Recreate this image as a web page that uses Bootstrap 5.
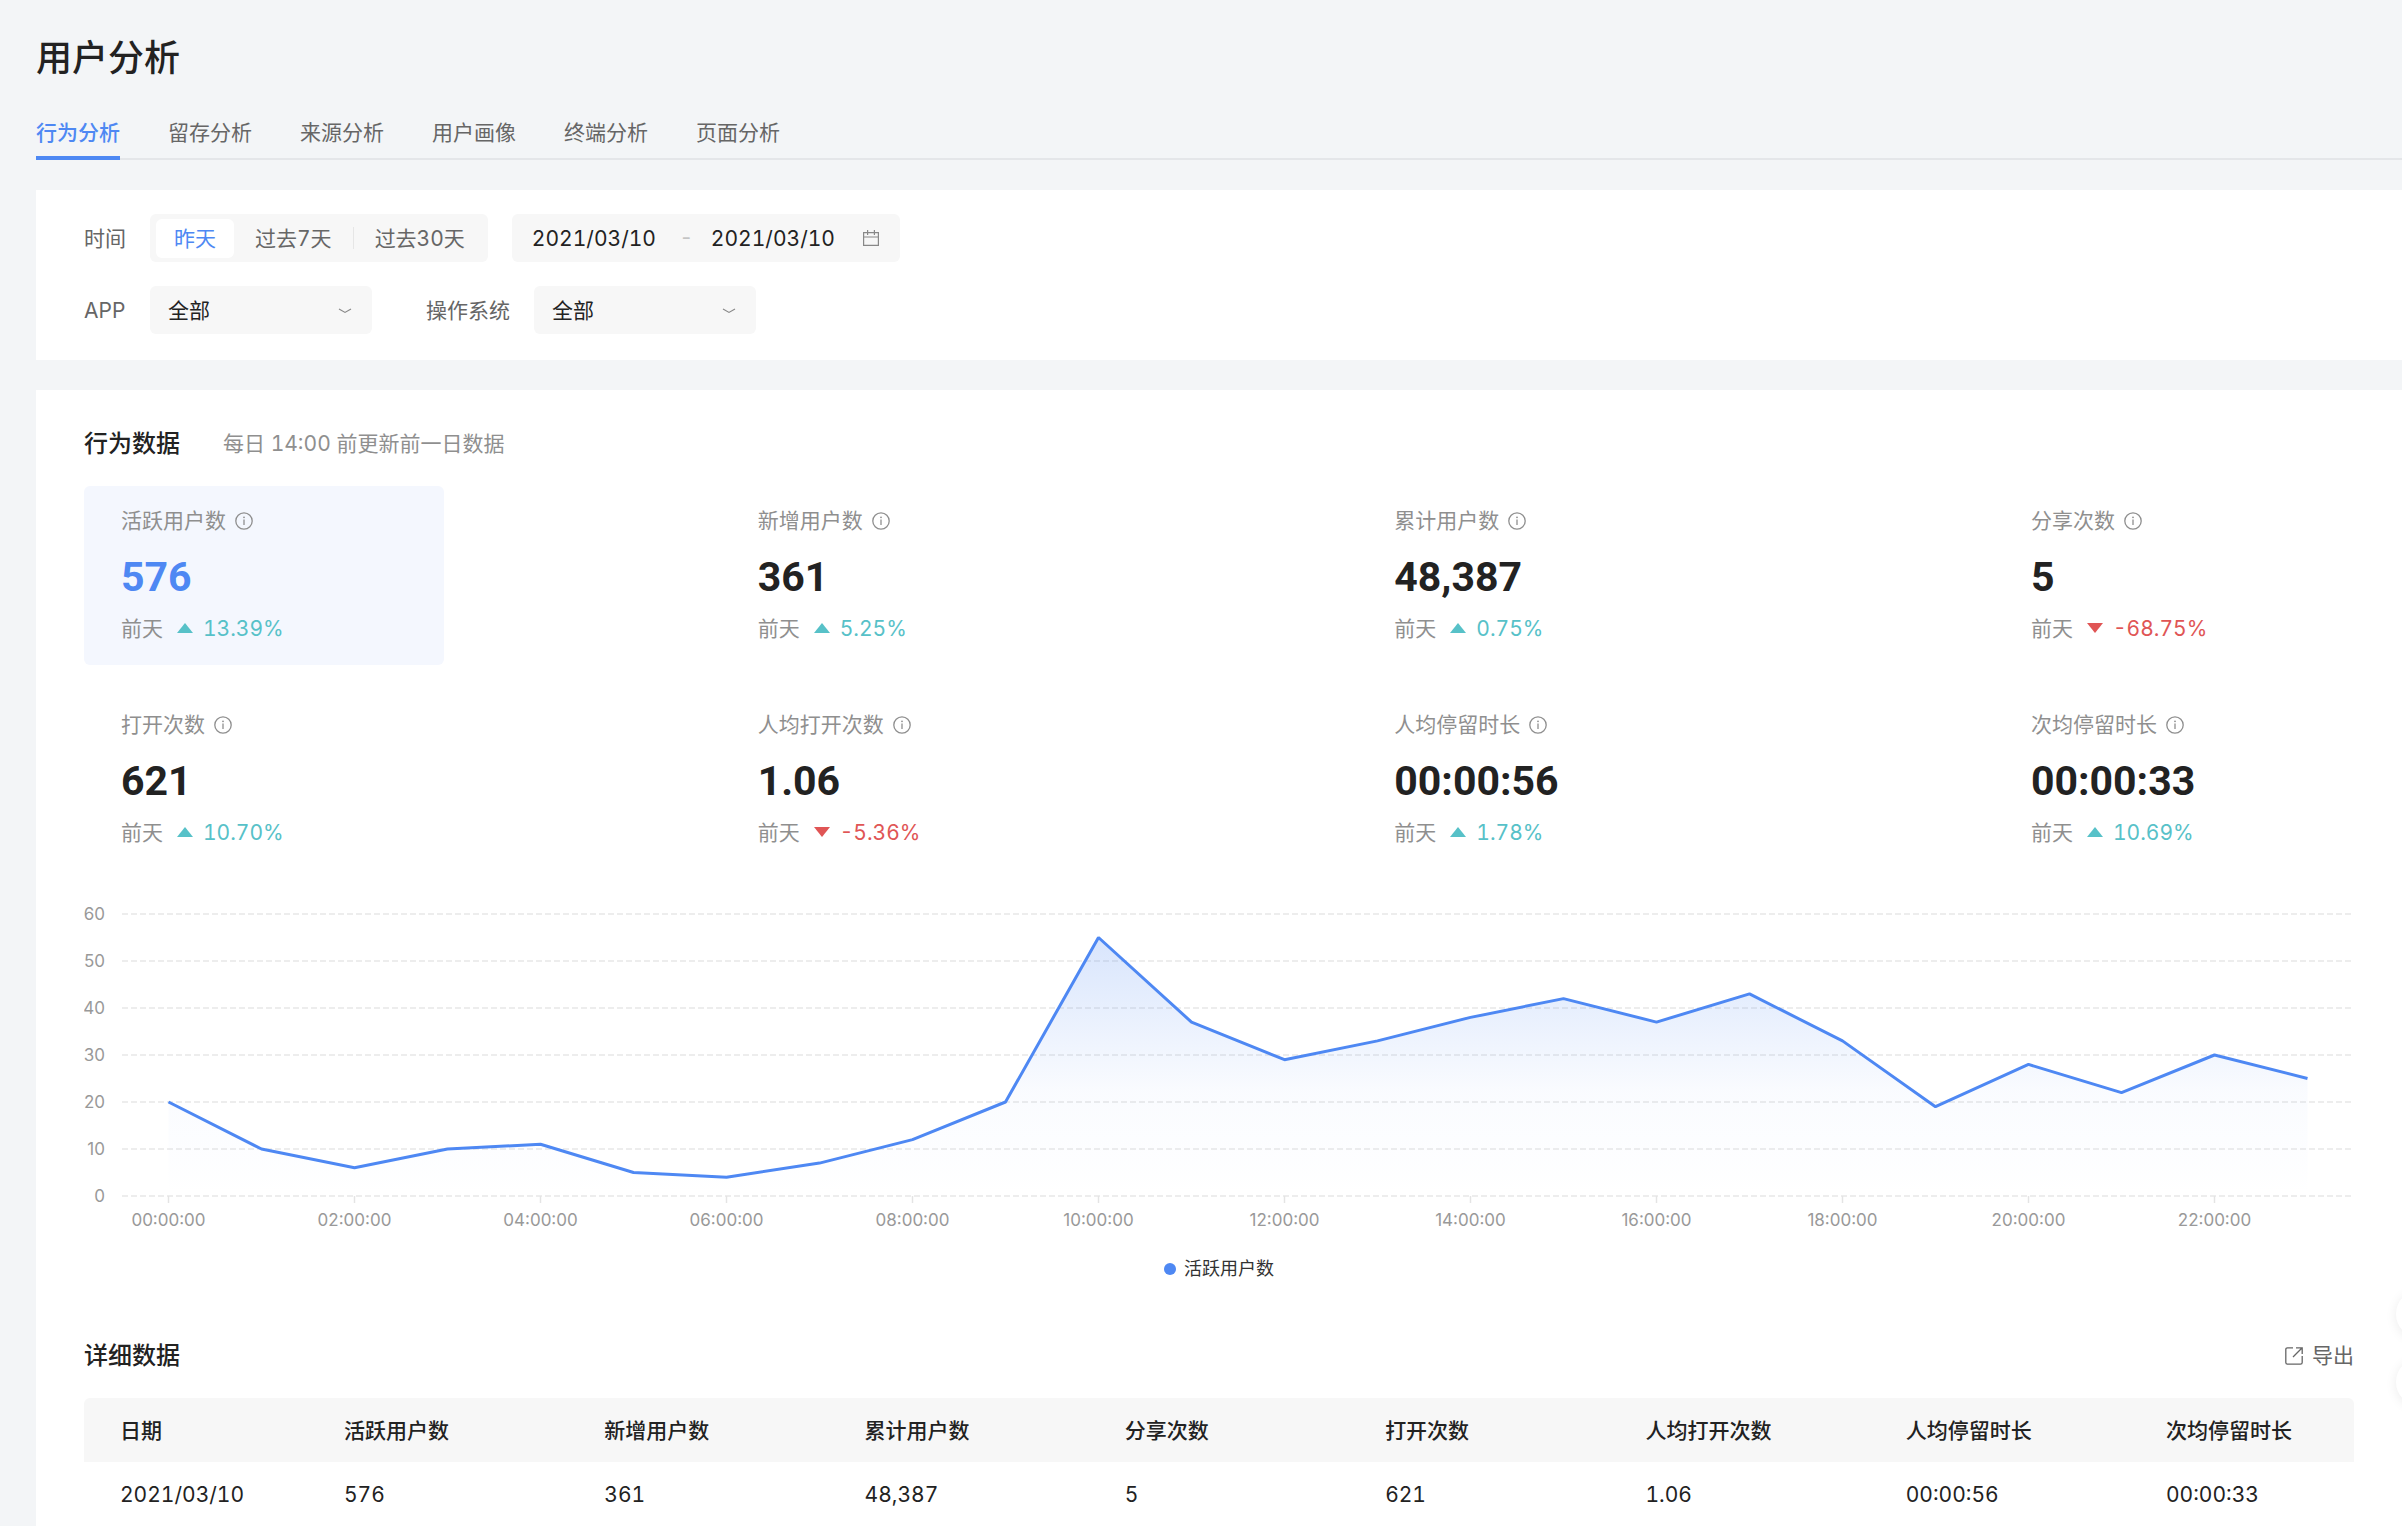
<!DOCTYPE html>
<html lang="zh-CN">
<head>
<meta charset="utf-8">
<meta name="viewport" content="width=device-width, initial-scale=1">
<title>用户分析</title>
<link href="https://cdn.jsdelivr.net/npm/bootstrap@5.3.0/dist/css/bootstrap.min.css" rel="stylesheet">
<style>
  :root { --ink: #222; --soft: #666; --faint: #8f8f8f; --brand: #4e88f3; --fill: #f7f7f7; --up: #57c1c8; --down: #e05555; }
  body { background: #f3f5f7; color: var(--ink); font: 400 21px/32px Inter, "Noto Sans CJK SC", sans-serif; font-variant-numeric: tabular-nums; }
  button, input, select { font: inherit; font-variant-numeric: inherit; color: inherit; }
  .page { padding: 31px 0 0 36px; }
  .page-title { font-size: 36px; line-height: 54px; font-weight: 500; margin: 0 0 32px; }
  .tabs { gap: 48px; box-shadow: inset 0 -2px #e4e6e9; }
  .tabs .nav-link { padding: 0 0 7px; color: var(--soft); border-bottom: 4px solid transparent; }
  .tabs .nav-link.active { color: var(--brand); border-color: var(--brand); font-weight: 500; }
  .panel { background: #fff; margin-top: 30px; padding: 24px 48px 26px; }
  .panel-main { padding: 37px 48px 0; }
  .filters { gap: 24px; }
  .filter-label { color: var(--soft); padding-top: 2px; }
  .narrow-label { width: 42px; white-space: nowrap; }
  .box { height: 48px; background-color: var(--fill); border: 0; border-radius: 6px; }
  .seg { padding: 0 2px 0 6px; }
  .seg button { height: 39px; border: 0; border-radius: 6px; background: none; color: var(--soft); padding: 2px 21px 0; white-space: nowrap; }
  .seg button.on { background: #fff; color: var(--brand); padding: 2px 18px 0; }
  .seg-line { width: 1px; height: 22px; background: #e6e6e6; }
  .dates { padding: 0 21px 0 20px; width: 388px; }
  .dates input { border: 0; background: none; padding: 2px 0 0; width: 130px; outline: 0; }
  .dates .dash { width: 49px; color: #c4c4c4; text-align: center; }
  .pick { position: relative; }
  .pick select { width: 222px; padding: 2px 18px 0; appearance: none; }
  .pick svg { position: absolute; right: 20px; top: 21px; pointer-events: none; }
  .second-filter { margin-left: 30px; }
  .heading { font-size: 24px; line-height: 34px; font-weight: 500; margin: 0; }
  .note { color: var(--faint); margin-left: 43px; }
  .stats { display: grid; grid-template-columns: repeat(4, 360px); justify-content: space-between; row-gap: 25px; margin-top: 25px; }
  .stat { border: 0; border-radius: 6px; background: none; padding: 19px 36px 20px 37px; text-align: left; color: var(--faint); }
  .stat.on { background: #f4f7fe; }
  .stat .figure-num { display: block; font: 700 41px/48px Roboto, sans-serif; color: var(--ink); margin: 16px 0 12px; }
  .stat.on .figure-num { color: var(--brand); }
  .stat .name, .stat .delta { display: flex; align-items: center; }
  .stat .name { gap: 9px; }
  .stat .rate { display: flex; align-items: center; gap: 10px; margin-left: 14px; color: var(--up); }
  .stat .rate svg { margin-bottom: 2px; }
  .stat .rate.fall { color: var(--down); }
  .chart { display: block; width: 100%; height: auto; margin-top: 27px; }
  .chart text { font: 17px Inter, sans-serif; fill: #999; }
  .legend-row { margin-top: 12px; font-size: 18px; line-height: 30px; gap: 8px; color: #333; }
  .legend-dot { width: 12px; height: 12px; border-radius: 50%; background: var(--brand); }
  .detail { margin-top: 55px; }
  .export { border: 0; background: none; padding: 0; gap: 9px; color: var(--soft); }
  .grid-table { table-layout: fixed; margin: 25px 0 0; color: var(--ink); }
  .grid-table th, .grid-table td { height: 64px; padding: 2px 0 0 36px; border: 0; vertical-align: middle; color: var(--ink); }
  .grid-table th { background: var(--fill); font-weight: 500; }
  .grid-table th:first-child { width: 224px; border-radius: 6px 0 0 0; }
  .grid-table th:last-child { width: 224px; border-radius: 0 6px 0 0; }
  .float-tools { position: fixed; right: -42px; top: 1290px; display: flex; flex-direction: column; gap: 20px; }
  .float-tools button { width: 48px; height: 48px; border: 0; border-radius: 50%; background: #fff; box-shadow: 0 2px 12px rgba(0,0,0,.08); }
</style>
<script src="https://cdn.jsdelivr.net/npm/bootstrap@5.3.0/dist/js/bootstrap.bundle.min.js"></script>
</head>
<body>
<svg class="d-none" aria-hidden="true">
  <symbol id="info" viewBox="0 0 18 18"><circle cx="9" cy="9" r="8.2" fill="none" stroke="currentColor" stroke-width="1.3"/><path d="M9 7.6V13" stroke="currentColor" stroke-width="1.3"/><circle cx="9" cy="5.3" r=".9" fill="currentColor"/></symbol>
  <symbol id="up" viewBox="0 0 16 10"><path d="M8 0l8 10H0z" fill="currentColor"/></symbol>
  <symbol id="down" viewBox="0 0 16 10"><path d="M8 10L0 0h16z" fill="currentColor"/></symbol>
  <symbol id="chev" viewBox="0 0 14 8"><path d="M1 2l6 3.4L13 2" fill="none" stroke="#888" stroke-width="1.2"/></symbol>
</svg>

<main class="page">
  <h1 class="page-title">用户分析</h1>
  <nav class="nav tabs" aria-label="分析类型">
    <a class="nav-link active" aria-current="page" href="#">行为分析</a>
    <a class="nav-link" href="#">留存分析</a>
    <a class="nav-link" href="#">来源分析</a>
    <a class="nav-link" href="#">用户画像</a>
    <a class="nav-link" href="#">终端分析</a>
    <a class="nav-link" href="#">页面分析</a>
  </nav>

  <section class="panel d-flex flex-column filters">
    <div class="d-flex align-items-center filters">
      <label class="filter-label narrow-label" for="from">时间</label>
      <div class="box seg d-flex align-items-center" role="group">
        <button type="button" class="on">昨天</button>
        <button type="button">过去7天</button>
        <span class="seg-line"></span>
        <button type="button">过去30天</button>
      </div>
      <div class="box dates d-flex align-items-center">
        <input id="from" type="text" value="2021/03/10" aria-label="开始日期">
        <span class="dash">-</span>
        <input type="text" value="2021/03/10" aria-label="结束日期">
        <svg class="ms-auto" width="16" height="18" viewBox="0 0 16 18" fill="none" stroke="#888" stroke-width="1.2"><path d="M.6 3.6h14.8v12.8H.6zM.6 8h14.8M4.6 1v5M11.4 1v5"/></svg>
      </div>
    </div>
    <div class="d-flex align-items-center filters">
      <label class="filter-label narrow-label" for="app">APP</label>
      <div class="pick"><select id="app" class="box d-block"><option>全部</option></select><svg width="14" height="8"><use href="#chev"/></svg></div>
      <label class="filter-label second-filter" for="os">操作系统</label>
      <div class="pick"><select id="os" class="box d-block"><option>全部</option></select><svg width="14" height="8"><use href="#chev"/></svg></div>
    </div>
  </section>

  <section class="panel panel-main">
    <div class="d-flex align-items-center">
      <h2 class="heading">行为数据</h2>
      <span class="note">每日 14:00 前更新前一日数据</span>
    </div>
    <div class="stats" id="stats">
      <button type="button" class="stat on"><span class="name">活跃用户数<svg width="18" height="18"><use href="#info"/></svg></span><span class="figure-num">576</span><span class="delta">前天<span class="rate"><svg width="16" height="10"><use href="#up"/></svg>13.39%</span></span></button>
      <button type="button" class="stat"><span class="name">新增用户数<svg width="18" height="18"><use href="#info"/></svg></span><span class="figure-num">361</span><span class="delta">前天<span class="rate"><svg width="16" height="10"><use href="#up"/></svg>5.25%</span></span></button>
      <button type="button" class="stat"><span class="name">累计用户数<svg width="18" height="18"><use href="#info"/></svg></span><span class="figure-num">48,387</span><span class="delta">前天<span class="rate"><svg width="16" height="10"><use href="#up"/></svg>0.75%</span></span></button>
      <button type="button" class="stat"><span class="name">分享次数<svg width="18" height="18"><use href="#info"/></svg></span><span class="figure-num">5</span><span class="delta">前天<span class="rate fall"><svg width="16" height="10"><use href="#down"/></svg>-68.75%</span></span></button>
      <button type="button" class="stat"><span class="name">打开次数<svg width="18" height="18"><use href="#info"/></svg></span><span class="figure-num">621</span><span class="delta">前天<span class="rate"><svg width="16" height="10"><use href="#up"/></svg>10.70%</span></span></button>
      <button type="button" class="stat"><span class="name">人均打开次数<svg width="18" height="18"><use href="#info"/></svg></span><span class="figure-num">1.06</span><span class="delta">前天<span class="rate fall"><svg width="16" height="10"><use href="#down"/></svg>-5.36%</span></span></button>
      <button type="button" class="stat"><span class="name">人均停留时长<svg width="18" height="18"><use href="#info"/></svg></span><span class="figure-num">00:00:56</span><span class="delta">前天<span class="rate"><svg width="16" height="10"><use href="#up"/></svg>1.78%</span></span></button>
      <button type="button" class="stat"><span class="name">次均停留时长<svg width="18" height="18"><use href="#info"/></svg></span><span class="figure-num">00:00:33</span><span class="delta">前天<span class="rate"><svg width="16" height="10"><use href="#up"/></svg>10.69%</span></span></button>
    </div>

    <svg class="chart" id="chart" viewBox="0 0 2270 346" role="img" aria-label="活跃用户数">
      <defs><linearGradient id="fade" gradientUnits="userSpaceOnUse" x1="0" y1="41" x2="0" y2="300">
        <stop offset="0" stop-color="#4e88f3" stop-opacity=".22"/><stop offset=".6" stop-color="#4e88f3" stop-opacity=".03"/><stop offset="1" stop-color="#4e88f3" stop-opacity="0"/>
      </linearGradient></defs>
    </svg>
    <div class="legend-row d-flex align-items-center justify-content-center"><span class="legend-dot"></span>活跃用户数</div>

    <div class="detail d-flex align-items-center justify-content-between">
      <h2 class="heading">详细数据</h2>
      <button type="button" class="export d-flex align-items-center">
        <svg width="18" height="18" viewBox="0 0 18 18" fill="none" stroke="currentColor" stroke-width="1.3"><path d="M8 .8H2.500Q.8.800.8 2.500V15.500Q.8 17.200 2.500 17.200H15.500Q17.200 17.200 17.200 15.500V9M11 .8h6.200v6.200M17.200.8L8 10"/></svg>导出
      </button>
    </div>
    <table class="table grid-table">
      <thead><tr><th scope="col">日期</th><th scope="col">活跃用户数</th><th scope="col">新增用户数</th><th scope="col">累计用户数</th><th scope="col">分享次数</th><th scope="col">打开次数</th><th scope="col">人均打开次数</th><th scope="col">人均停留时长</th><th scope="col">次均停留时长</th></tr></thead>
      <tbody><tr><td>2021/03/10</td><td>576</td><td>361</td><td>48,387</td><td>5</td><td>621</td><td>1.06</td><td>00:00:56</td><td>00:00:33</td></tr></tbody>
    </table>
  </section>
</main>

<div class="float-tools"><button type="button" aria-label="反馈"></button><button type="button" aria-label="帮助"></button></div>

<script>
  // Hourly active users, drawn as a line with a faded area below it
  const hours = [20,10,6,10,11,5,4,7,12,20,55,37,29,33,38,42,37,43,33,19,28,22,30,25];
  const left = 38, right = 2270, base = 300, unit = 4.7, step = (right - left) / hours.length;
  const x = i => left + step * (i + .5), y = v => base - v * unit;
  const pts = hours.map((v, i) => x(i).toFixed(1) + ',' + y(v).toFixed(1)).join(' ');
  let out = '';
  for (let v = 0; v <= 60; v += 10) {
    out += `<line x1="${left}" x2="${right}" y1="${y(v)}" y2="${y(v)}" stroke="#e8e8e8" stroke-width="1.5" stroke-dasharray="6 3"/>`;
    out += `<text x="21" y="${y(v) + 6}" text-anchor="end">${v}</text>`;
  }
  for (let i = 0; i < hours.length; i += 2) {
    out += `<line x1="${x(i)}" x2="${x(i)}" y1="${base}" y2="${base + 7}" stroke="#e4e4e4" stroke-width="1.5"/>`;
    out += `<text x="${x(i)}" y="${base + 30}" text-anchor="middle">${String(i).padStart(2, '0')}:00:00</text>`;
  }
  out += `<polygon points="${x(0)},${base} ${pts} ${x(23)},${base}" fill="url(#fade)"/>`;
  out += `<polyline points="${pts}" fill="none" stroke="#4e88f3" stroke-width="3" stroke-linejoin="bevel"/>`;
  document.getElementById('chart').insertAdjacentHTML('beforeend', out);
</script>
</body>
</html>
